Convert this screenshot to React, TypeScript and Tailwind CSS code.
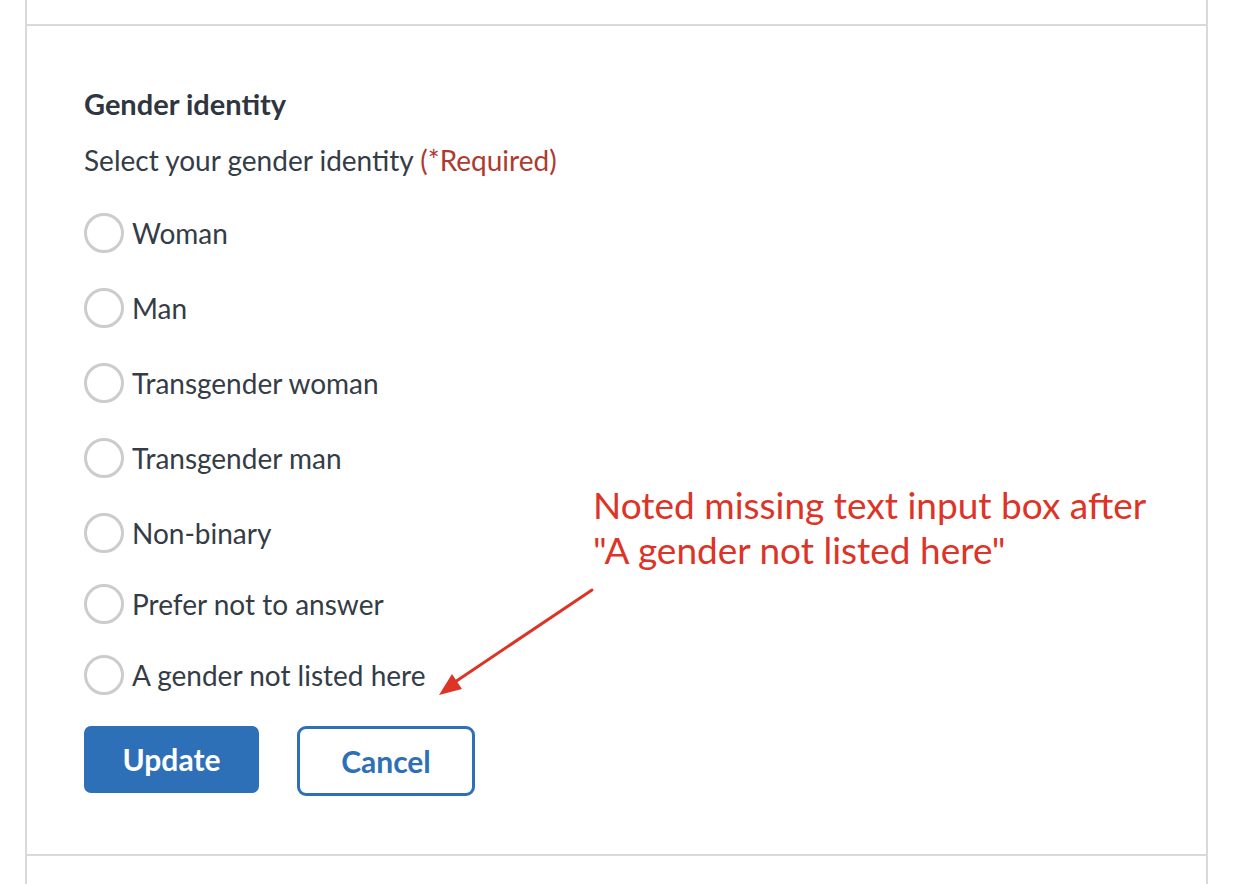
import React from "react";

const options = [
  "Woman",
  "Man",
  "Transgender woman",
  "Transgender man",
  "Non-binary",
  "Prefer not to answer",
  "A gender not listed here",
];

export default function App() {
  return (
    <div className="w-[1238px] h-[884px] bg-white overflow-hidden" style={{ fontFamily: "Lato, 'Noto Sans', sans-serif" }}>
      <div className="ml-[25px] w-[1183px] h-full border-x-2 border-[#d9d9d9] flex flex-col">
        <div className="h-[26px] shrink-0 border-b-2 border-[#d9d9d9]" />
        <div className="relative h-[830px] shrink-0 border-b-2 border-[#d9d9d9] pl-[57px] pt-[62px]">
          <h2 className="text-[29px] leading-[32px] font-bold text-[#2f3640]">Gender identity</h2>
          <p className="mt-[24px] text-[28px] leading-[32px] text-[#343c46]">
            Select your gender identity <span className="text-[#ad3b30]">(*Required)</span>
          </p>
          <div className="mt-[37px] flex flex-col">
            {options.map((o, i) => (
              <label key={o} className={`flex items-center gap-[8px] h-[40px] ${i === 0 ? "" : i < 5 ? "mt-[35px]" : "mt-[31px]"}`}>
                <span className="w-[40px] h-[40px] rounded-full border-[3px] border-[#cccccc] bg-white shrink-0" />
                <span className="text-[28px] leading-[32px] text-[#343c46]">{o}</span>
              </label>
            ))}
          </div>
          <div className="mt-[31px] flex items-start gap-[38px]">
            <button className="w-[175px] h-[67px] rounded-[7px] bg-[#2e70b8] text-white text-[30px] font-bold">Update</button>
            <button className="w-[178px] h-[70px] rounded-[9px] border-[3px] border-[#2e70b8] text-[#2e70b8] text-[30px] font-bold bg-white">Cancel</button>
          </div>
          <div className="absolute left-[566px] top-[456px] text-[#dc3427] text-[37px] leading-[45px]">
            <div>Noted missing text input box after</div>
            <div>"A gender not listed here"</div>
          </div>
          <svg className="absolute left-0 top-0 pointer-events-none" width="1180" height="830" viewBox="0 0 1180 830">
            <line x1="565" y1="564" x2="422" y2="660" stroke="#dc3427" strokeWidth="3" strokeLinecap="round" />
            <polygon points="412,669 425,648 435,663" fill="#dc3427" />
          </svg>
        </div>
        <div className="flex-1" />
      </div>
    </div>
  );
}
